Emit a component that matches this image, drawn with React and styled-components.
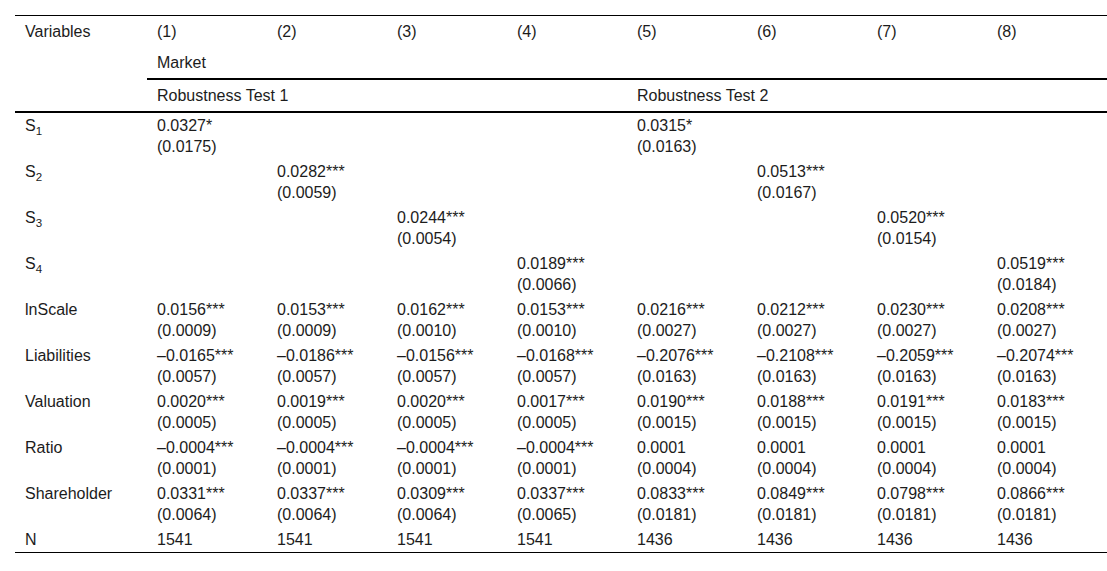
import React from 'react'
import styled, { createGlobalStyle } from 'styled-components'

const GlobalStyle = createGlobalStyle`
  html, body {
    margin: 0;
    padding: 0;
    background: #ffffff;
  }
  body {
    font-family: "Liberation Sans", Arial, sans-serif;
    color: #1c1c1c;
  }
`

const Page = styled.div`
  padding: 15px 0 0 15px;
  width: 1092px;
`

const Table = styled.table`
  width: 1092px;
  table-layout: fixed;
  border-collapse: separate;
  border-spacing: 0;
  font-size: 16px;
  line-height: 21px;
`

const Col = styled.col`
  width: ${p => p.$w}px;
`

const HeadCell = styled.th`
  text-align: left;
  font-weight: normal;
  vertical-align: top;
  padding: 5px 10px;
  white-space: nowrap;
  border-top: ${p => (p.$top ? '1px solid #000' : '0')};
  border-bottom: ${p => (p.$rule ? '2px solid #000' : '0')};
`

const Cell = styled.td`
  vertical-align: top;
  padding: 2px 10px;
  white-space: nowrap;
  border-bottom: ${p => (p.$last ? '1px solid #000' : '0')};
`

const Line = styled.span`
  display: block;
  height: 21px;
`

const Sub = styled.sub`
  font-size: 0.72em;
  line-height: 0;
  vertical-align: -0.32em;
`

const rows = [
  { label: ['S', '1'], cells: [['0.0327*', '(0.0175)'], null, null, null, ['0.0315*', '(0.0163)'], null, null, null] },
  { label: ['S', '2'], cells: [null, ['0.0282***', '(0.0059)'], null, null, null, ['0.0513***', '(0.0167)'], null, null] },
  { label: ['S', '3'], cells: [null, null, ['0.0244***', '(0.0054)'], null, null, null, ['0.0520***', '(0.0154)'], null] },
  { label: ['S', '4'], cells: [null, null, null, ['0.0189***', '(0.0066)'], null, null, null, ['0.0519***', '(0.0184)']] },
  {
    label: 'lnScale',
    cells: [
      ['0.0156***', '(0.0009)'], ['0.0153***', '(0.0009)'], ['0.0162***', '(0.0010)'], ['0.0153***', '(0.0010)'],
      ['0.0216***', '(0.0027)'], ['0.0212***', '(0.0027)'], ['0.0230***', '(0.0027)'], ['0.0208***', '(0.0027)'],
    ],
  },
  {
    label: 'Liabilities',
    cells: [
      ['\u20130.0165***', '(0.0057)'], ['\u20130.0186***', '(0.0057)'], ['\u20130.0156***', '(0.0057)'], ['\u20130.0168***', '(0.0057)'],
      ['\u20130.2076***', '(0.0163)'], ['\u20130.2108***', '(0.0163)'], ['\u20130.2059***', '(0.0163)'], ['\u20130.2074***', '(0.0163)'],
    ],
  },
  {
    label: 'Valuation',
    cells: [
      ['0.0020***', '(0.0005)'], ['0.0019***', '(0.0005)'], ['0.0020***', '(0.0005)'], ['0.0017***', '(0.0005)'],
      ['0.0190***', '(0.0015)'], ['0.0188***', '(0.0015)'], ['0.0191***', '(0.0015)'], ['0.0183***', '(0.0015)'],
    ],
  },
  {
    label: 'Ratio',
    cells: [
      ['\u20130.0004***', '(0.0001)'], ['\u20130.0004***', '(0.0001)'], ['\u20130.0004***', '(0.0001)'], ['\u20130.0004***', '(0.0001)'],
      ['0.0001', '(0.0004)'], ['0.0001', '(0.0004)'], ['0.0001', '(0.0004)'], ['0.0001', '(0.0004)'],
    ],
  },
  {
    label: 'Shareholder',
    cells: [
      ['0.0331***', '(0.0064)'], ['0.0337***', '(0.0064)'], ['0.0309***', '(0.0064)'], ['0.0337***', '(0.0065)'],
      ['0.0833***', '(0.0181)'], ['0.0849***', '(0.0181)'], ['0.0798***', '(0.0181)'], ['0.0866***', '(0.0181)'],
    ],
  },
  { label: 'N', cells: [['1541'], ['1541'], ['1541'], ['1541'], ['1436'], ['1436'], ['1436'], ['1436']] },
]

const Label = ({ label }) =>
  Array.isArray(label) ? (
    <>
      {label[0]}
      <Sub>{label[1]}</Sub>
    </>
  ) : (
    label
  )

export default function App() {
  const cols = [1, 2, 3, 4, 5, 6, 7, 8]
  return (
    <Page>
      <GlobalStyle />
      <Table>
        <colgroup>
          <Col $w={132} />
          {cols.map(c => (
            <Col key={c} $w={120} />
          ))}
        </colgroup>
        <thead>
          <tr>
            <HeadCell rowSpan={3} $top $rule>Variables</HeadCell>
            {cols.map(c => (
              <HeadCell key={c} $top>({c})</HeadCell>
            ))}
          </tr>
          <tr>
            <HeadCell colSpan={8} $rule>Market</HeadCell>
          </tr>
          <tr>
            <HeadCell colSpan={4} $rule>Robustness Test 1</HeadCell>
            <HeadCell colSpan={4} $rule>Robustness Test 2</HeadCell>
          </tr>
        </thead>
        <tbody>
          {rows.map((r, i) => {
            const last = i === rows.length - 1
            return (
              <tr key={i}>
                <Cell $last={last}>
                  <Line>
                    <Label label={r.label} />
                  </Line>
                </Cell>
                {r.cells.map((v, j) => (
                  <Cell key={j} $last={last}>
                    {v && v.map((t, k) => <Line key={k}>{t}</Line>)}
                  </Cell>
                ))}
              </tr>
            )
          })}
        </tbody>
      </Table>
    </Page>
  )
}
